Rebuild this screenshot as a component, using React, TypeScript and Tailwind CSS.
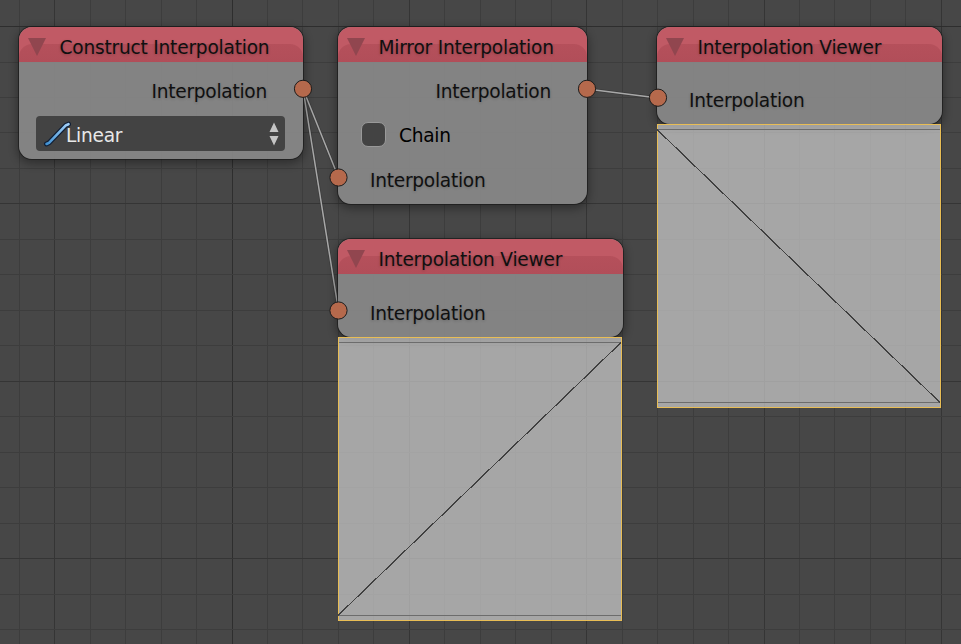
import type { ReactNode } from "react";

const columns = Array.from({ length: 27 }, (_, i) => i - 6);
const rows = Array.from({ length: 18 }, (_, i) => i);

function Grid() {
  return (
    <svg className="absolute inset-0" width="961" height="644" shapeRendering="crispEdges">
      {columns.map((k) => (
        <rect key={k} x={Math.floor(232.05 + 35.465 * k)} y="0" width="1" height="644" fill={k === 0 ? "#2e2e2e" : k % 5 === 0 ? "#353535" : "#3d3d3d"} />
      ))}
      {rows.map((k) => (
        <rect key={k} x="0" y={Math.floor(26.6 + 35.465 * k)} width="961" height="1" fill={k === 0 ? "#2e2e2e" : k % 5 === 0 ? "#353535" : "#3d3d3d"} />
      ))}
    </svg>
  );
}

function Links() {
  const links = ["M303 89L338.5 177.5", "M303 89L338.5 310.5", "M587 89L658 98"];
  return (
    <svg className="absolute inset-0" width="961" height="644" fill="none">
      {links.map((d) => (
        <g key={d}>
          <path d={d} stroke="#303030" strokeOpacity="0.5" strokeWidth="3" />
          <path d={d} stroke="#a8a8a8" strokeWidth="1.5" />
        </g>
      ))}
    </svg>
  );
}

function Sockets() {
  const points = [[303, 88.8], [338.5, 177.5], [338.5, 310.5], [587, 88.8], [658, 97.7]];
  return (
    <svg className="absolute inset-0" width="961" height="644">
      {points.map(([x, y]) => (
        <circle key={`${x}-${y}`} cx={x} cy={y} r="8.6" fill="#b5694c" stroke="#1c1c1c" strokeWidth="1" />
      ))}
    </svg>
  );
}

function Node({ title, className, children }: { title: string; className: string; children: ReactNode }) {
  return (
    <section className={`absolute flex flex-col overflow-hidden rounded-[13px] bg-[#858585]/96 shadow-[0_0_0_1px_rgba(25,25,25,0.7),0_3px_9px_2px_rgba(0,0,0,0.32)] ${className}`}>
      <header className="relative flex h-[35px] shrink-0 items-center bg-[#c15a65] pl-[9px]">
        <div className="absolute inset-x-0 top-[17px] bottom-0 rounded-t-[13px] bg-linear-to-b from-[#b5505b] to-[#b14e59]" />
        <svg className="relative mt-[5px] shrink-0" width="18" height="18">
          <path d="M0 0H18L9 18Z" fill="#91464f" />
        </svg>
        <h2 className="relative ml-[13.5px] pt-[7px] text-[18.6px] leading-[22px] tracking-[-0.22px] whitespace-nowrap text-[#101010] [text-shadow:0_1px_3px_rgba(0,0,0,0.2)]">{title}</h2>
      </header>
      {children}
    </section>
  );
}

function Label({ className, children }: { className: string; children: string }) {
  return <div className={`shrink-0 leading-[22px] text-[#101010] [text-shadow:0_1px_3px_rgba(0,0,0,0.2)] ${className}`}>{children}</div>;
}

function CurveView({ className, path }: { className: string; path: string }) {
  return (
    <div className={`absolute h-[284px] w-[284px] border border-[#e8bd55] bg-[#dadada]/65 ${className}`}>
      <svg className="-m-px block" width="284" height="284" shapeRendering="crispEdges" fill="none">
        <path d="M1 5.5H283M1 278.5H283" stroke="#6c6c6c" />
        <path d={path} stroke="#404040" strokeWidth="1.2" />
      </svg>
    </div>
  );
}

export default function App() {
  return (
    <main className="relative h-[644px] w-[961px] overflow-hidden bg-[#474747] font-['DejaVu_Sans',sans-serif] text-[18.6px] tracking-[-0.27px]">
      <Grid />
      <Links />
      <Node title="Construct Interpolation" className="top-[27px] left-[19px] h-[132px] w-[284px]">
        <Label className="mt-[19px] pr-[36px] text-right">Interpolation</Label>
        <div className="mr-[18px] ml-[17px] mt-[13px] flex h-[35px] items-center rounded bg-[#434343] pr-[6px] pl-[7px] text-[#e8e8e8]">
          <svg width="28" height="28" fill="none" strokeLinecap="round" strokeLinejoin="round">
            <path d="M3.5 24L6 22.8L23 5.2L25.5 4.2" stroke="#101f36" strokeWidth="5" />
            <path d="M3.5 24L6 22.8L23 5.2L25.5 4.2" stroke="url(#stroke-blue)" strokeWidth="2.6" />
            <defs>
              <linearGradient id="stroke-blue" x1="3" y1="25" x2="26" y2="4" gradientUnits="userSpaceOnUse">
                <stop stopColor="#3e8fd0" />
                <stop offset="1" stopColor="#a4d2fa" />
              </linearGradient>
            </defs>
          </svg>
          <span className="-ml-[5px] grow pt-[4px] leading-[22px]">Linear</span>
          <svg width="10" height="24" fill="#c4c4c4">
            <path d="M0.5 10L5 0.5L9.5 10ZM0.5 14H9.5L5 23.5Z" />
          </svg>
        </div>
      </Node>
      <Node title="Mirror Interpolation" className="top-[27px] left-[338px] h-[177px] w-[249px]">
        <Label className="mt-[19px] pr-[36px] text-right">Interpolation</Label>
        <div className="mt-[18px] ml-[23px] flex h-[26px] items-center text-black">
          <span className="h-[25px] w-[25px] rounded-[7px] border border-[#999] bg-[#434343]" />
          <span className="ml-[13px] pt-[3px] leading-[22px]">Chain</span>
        </div>
        <Label className="mt-[23px] pl-[32px]">Interpolation</Label>
      </Node>
      <Node title="Interpolation Viewer" className="top-[27px] left-[657px] h-[97px] w-[285px]">
        <Label className="mt-[28px] pl-[32px]">Interpolation</Label>
      </Node>
      <Node title="Interpolation Viewer" className="top-[239px] left-[338px] h-[98px] w-[285px]">
        <Label className="mt-[29px] pl-[32px]">Interpolation</Label>
      </Node>
      <CurveView className="top-[124px] left-[657px]" path="M0 5.5L283 278.5" />
      <CurveView className="top-[337px] left-[338px]" path="M0 278.5L283 5.5" />
      <Sockets />
    </main>
  );
}
